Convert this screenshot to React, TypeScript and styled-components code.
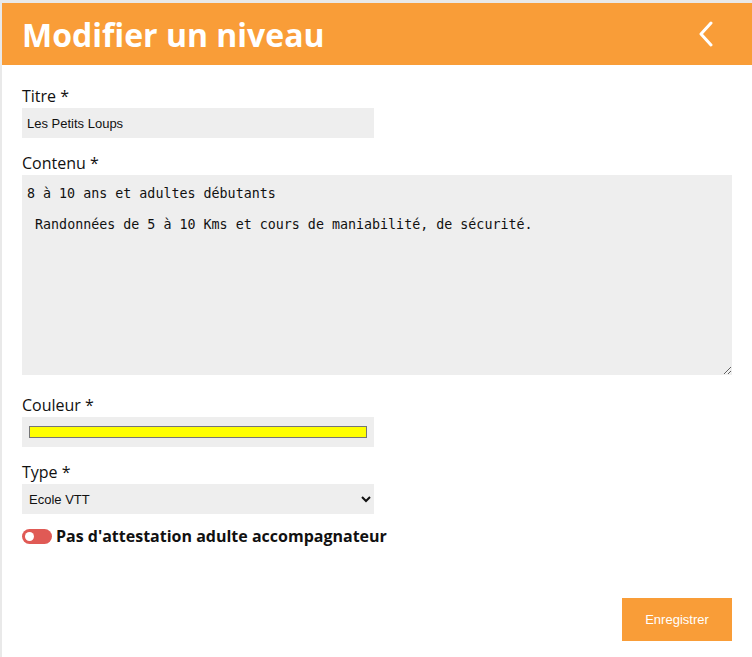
import React, { useState } from "react";
import styled, { createGlobalStyle } from "styled-components";

const Global = createGlobalStyle`
  html, body { margin: 0; padding: 0; background: #e9e9e9; }
  body { font-family: "Open Sans", "Noto Sans", sans-serif; }
  * { box-sizing: border-box; }
`;

const Page = styled.div`
  margin: 3px 0 0 2px;
  min-height: 654px;
  background: #ffffff;
  display: flex;
  flex-direction: column;
`;

const Header = styled.header`
  height: 62px;
  background: #f99d38;
  display: flex;
  align-items: center;
  justify-content: space-between;
  padding: 0 37px 0 20px;
`;

const Title = styled.h1`
  margin: 0;
  color: #ffffff;
  font-family: "Open Sans", sans-serif;
  font-weight: 700;
  font-size: 32px;
  line-height: 1;
  padding-top: 2px;
`;

const BackButton = styled.button`
  border: none;
  background: transparent;
  padding: 0;
  width: 18px;
  height: 26px;
  display: flex;
  align-items: center;
  justify-content: center;
  cursor: pointer;
`;

const Form = styled.form`
  display: flex;
  flex-direction: column;
  padding: 20px 20px 16px 20px;
  flex: 1;
`;

const Field = styled.div<{ $gap?: number }>`
  display: flex;
  flex-direction: column;
  align-items: flex-start;
  margin-bottom: ${(p) => p.$gap ?? 14}px;
`;

const Label = styled.label`
  font-family: "Open Sans", sans-serif;
  font-size: 16px;
  line-height: 22px;
  color: #111;
  margin-bottom: 1px;
`;

const TextInput = styled.input`
  width: 352px;
  height: 30px;
  border: none;
  background: #eeeeee;
  padding: 0 5px;
  font-family: "Liberation Sans", Arial, sans-serif;
  font-size: 13px;
  color: #111;
  outline: none;
`;

const TextArea = styled.textarea`
  display: block;
  width: 710px;
  height: 200px;
  border: none;
  background: #eeeeee;
  padding: 11px 5px 10px 5px;
  font-family: "DejaVu Sans Mono", monospace;
  font-size: 13.333px;
  line-height: 15.5px;
  color: #111;
  outline: none;
`;

const ColorInput = styled.input`
  width: 352px;
  height: 30px;
  border: none;
  background: #eeeeee;
  padding: 9px 7px;
  cursor: pointer;
  -webkit-appearance: none;
  appearance: none;
  &::-webkit-color-swatch-wrapper { padding: 0; }
  &::-webkit-color-swatch { border: 1px solid #767676; border-radius: 0; }
`;

const Select = styled.select`
  width: 352px;
  height: 30px;
  border: none;
  background: #eeeeee;
  padding: 0 3px;
  font-family: "Liberation Sans", Arial, sans-serif;
  font-size: 13px;
  color: #111;
  outline: none;
`;

const ToggleRow = styled.label`
  display: flex;
  align-items: center;
  gap: 4px;
  margin-top: -3px;
  cursor: pointer;
`;

const Track = styled.span<{ $on: boolean }>`
  position: relative;
  width: 30px;
  height: 15px;
  border-radius: 8px;
  background: ${(p) => (p.$on ? "#4caf50" : "#e05a55")};
  flex-shrink: 0;
`;

const Knob = styled.span<{ $on: boolean }>`
  position: absolute;
  top: 3px;
  left: ${(p) => (p.$on ? "18px" : "3px")};
  width: 9px;
  height: 9px;
  border-radius: 50%;
  background: #ffffff;
`;

const ToggleText = styled.span`
  font-family: "Open Sans", sans-serif;
  font-weight: 700;
  font-size: 16px;
  color: #111;
`;

const Footer = styled.div`
  margin-top: auto;
  display: flex;
  justify-content: flex-end;
`;

const SaveButton = styled.button`
  width: 110px;
  height: 43px;
  border: none;
  background: #f99d38;
  color: #ffffff;
  font-family: "Liberation Sans", Arial, sans-serif;
  font-size: 13px;
  cursor: pointer;
`;

export default function App() {
  const [on, setOn] = useState(false);
  return (
    <>
      <Global />
      <Page>
        <Header>
          <Title>Modifier un niveau</Title>
          <BackButton type="button" aria-label="Retour">
            <svg width="16" height="26" viewBox="0 0 16 26">
              <polyline
                points="13,2 3,13 13,24"
                fill="none"
                stroke="#ffffff"
                strokeWidth="3"
                strokeLinecap="round"
                strokeLinejoin="round"
              />
            </svg>
          </BackButton>
        </Header>
        <Form onSubmit={(e) => e.preventDefault()}>
          <Field>
            <Label>Titre *</Label>
            <TextInput defaultValue="Les Petits Loups" />
          </Field>
          <Field $gap={19}>
            <Label>Contenu *</Label>
            <TextArea
              defaultValue={
                "8 à 10 ans et adultes débutants\n\n Randonnées de 5 à 10 Kms et cours de maniabilité, de sécurité."
              }
            />
          </Field>
          <Field>
            <Label>Couleur *</Label>
            <ColorInput type="color" defaultValue="#ffff00" />
          </Field>
          <Field>
            <Label>Type *</Label>
            <Select defaultValue="Ecole VTT">
              <option>Ecole VTT</option>
              <option>Randonnée</option>
            </Select>
          </Field>
          <ToggleRow onClick={() => setOn(!on)}>
            <Track $on={on}>
              <Knob $on={on} />
            </Track>
            <ToggleText>Pas d'attestation adulte accompagnateur</ToggleText>
          </ToggleRow>
          <Footer>
            <SaveButton type="submit">Enregistrer</SaveButton>
          </Footer>
        </Form>
      </Page>
    </>
  );
}
